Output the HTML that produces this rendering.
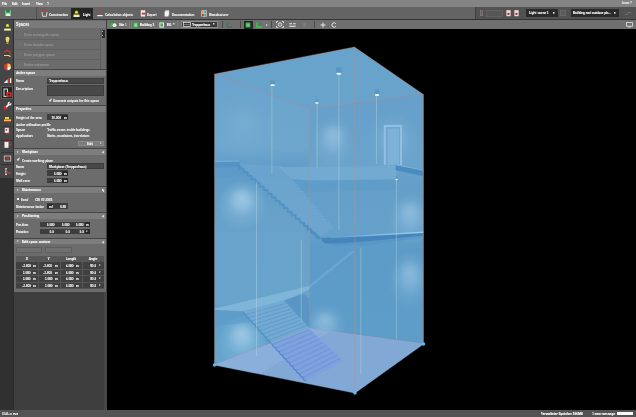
<!DOCTYPE html>
<html><head><meta charset="utf-8">
<style>
html,body{margin:0;padding:0;}
body{width:636px;height:417px;overflow:hidden;background:#000;position:relative;font-family:"Liberation Sans",sans-serif;font-size:4.2px;color:#e8e8e8;font-weight:bold;line-height:1;}
.abs{position:absolute;}
#menubar{left:0;top:0;width:636px;height:7px;background:#848484;}
#toolbar{left:0;top:7px;width:636px;height:12.3px;background:#646464;}
#tbline{left:0;top:19.2px;width:636px;height:0.9px;background:#333333;}
#strip{left:0;top:20px;width:13px;height:390px;background:#303030;}
#stripicons{left:0;top:20px;width:13px;height:158px;background:#454545;}
#panelbg{left:13px;top:20px;width:94px;height:390px;background:#3e3e3e;border-left:1.3px solid #2c2c2c;box-sizing:border-box;}
#panel{left:14.3px;top:20px;width:91.9px;height:272px;background:#6c6c6c;}
#vtool{left:106.5px;top:20.1px;width:529.5px;height:8.6px;background:#6f6f6f;}
#status{left:0;top:409.8px;width:636px;height:7.2px;background:#535353;}
.t{position:absolute;white-space:nowrap;will-change:transform;text-shadow:0 0 0.35px currentColor;transform:scaleX(0.73);transform-origin:0 50%;}
.tr{transform-origin:100% 50%;}
.tc{transform-origin:50% 50%;}
</style></head><body>
<div class="abs" id="menubar"></div>
<div class="abs" id="toolbar"></div>
<div class="abs" id="tbline"></div>
<div class="abs" id="strip"></div>
<div class="abs" id="stripicons"></div>
<div class="abs" id="panelbg"></div>
<div class="abs" id="panel"></div>
<div class="abs" id="vtool"></div>
<div class="abs" id="status"></div>
<!--SCENE-->
<svg class="abs" style="left:0;top:0" width="636" height="417" viewBox="0 0 636 417">
<defs>
<radialGradient id="spot" cx="0.5" cy="0.5" r="0.5" fx="0.5" fy="0.36"><stop offset="0" stop-color="#aed2ea" stop-opacity="0.9"/><stop offset="0.3" stop-color="#a8cee8" stop-opacity="0.7"/><stop offset="0.65" stop-color="#9cc8e6" stop-opacity="0.25"/><stop offset="1" stop-color="#9cc8e6" stop-opacity="0"/></radialGradient>
<linearGradient id="lw" x1="0" y1="0" x2="0" y2="1"><stop offset="0" stop-color="#6aa3cb"/><stop offset="0.25" stop-color="#6ea7ce"/><stop offset="0.33" stop-color="#5f9cc8"/><stop offset="0.5" stop-color="#68a2ca"/><stop offset="0.78" stop-color="#69a4cc"/><stop offset="0.82" stop-color="#5f9fca"/><stop offset="1" stop-color="#66a6ce"/></linearGradient>
<linearGradient id="rw" x1="0" y1="0" x2="0" y2="1"><stop offset="0" stop-color="#669fc9"/><stop offset="0.28" stop-color="#6aa3cc"/><stop offset="0.36" stop-color="#639fc9"/><stop offset="0.55" stop-color="#66a1ca"/><stop offset="0.62" stop-color="#5c9bc8"/><stop offset="1" stop-color="#5f9dc9"/></linearGradient>
<linearGradient id="hl" x1="0" y1="0" x2="1" y2="0"><stop offset="0" stop-color="#8cbfe3" stop-opacity="0.3"/><stop offset="0.5" stop-color="#94c5e7" stop-opacity="0.85"/><stop offset="1" stop-color="#a0cdec" stop-opacity="1"/></linearGradient>
<clipPath id="hex"><polygon points="214.5,74 354.5,47 423.5,94.5 423.5,344 355,393 214.5,365"/></clipPath>
<clipPath id="lwc"><polygon points="214.5,74 309.5,109 309.5,328.6 214.5,365"/></clipPath>
<clipPath id="rwc"><polygon points="309.5,109 423.5,94.5 423.5,344 309.5,328.6"/></clipPath>
</defs>
<g clip-path="url(#hex)">
<polygon points="214.5,74 354.5,47 423.5,94.5 423.5,344 355,393 214.5,365" fill="#68a2ca"/>
<polygon points="214.5,74 309.5,109 309.5,328.6 214.5,365" fill="url(#lw)"/>
<polygon points="309.5,109 423.5,94.5 423.5,344 309.5,328.6" fill="url(#rw)"/>
<polygon points="214.5,74 354.5,47 423.5,94.5 309.5,109" fill="#68a3cb"/>
<!-- light spots -->
<g clip-path="url(#lwc)">
<ellipse cx="243" cy="130" rx="32" ry="34" fill="url(#spot)" opacity="0.15"/>
<ellipse cx="242" cy="205" rx="25" ry="25" fill="url(#spot)" opacity="0.85"/>
<ellipse cx="242" cy="341" rx="25" ry="27" fill="url(#spot)" opacity="0.85"/>
</g>
<g clip-path="url(#rwc)">
<ellipse cx="333" cy="142" rx="21" ry="25" fill="url(#spot)" opacity="0.6"/>
<ellipse cx="394" cy="143" rx="26" ry="30" fill="url(#spot)" opacity="0.4"/>
<ellipse cx="410" cy="219" rx="22" ry="26" fill="url(#spot)" opacity="0.6"/>
<ellipse cx="410" cy="281" rx="22" ry="30" fill="url(#spot)" opacity="0.6"/>
<ellipse cx="325" cy="327" rx="22" ry="23" fill="url(#spot)" opacity="0.6"/>
</g>
<!-- door -->
<rect x="383.800" y="125" width="18.200" height="39.800" fill="#92c0e1"/>
<rect x="385.800" y="127" width="14.200" height="37.800" fill="#70a7d0"/>
<rect x="387.800" y="128.500" width="11.200" height="36.300" fill="#7db1d7"/>
<!-- upper landing underside (light band) -->
<polygon points="279,167 396,166 396,179.500 309.500,180.500 292,179" fill="#74abd2" opacity="0.9"/>
<polygon points="292,179 309.500,180.500 396,179.500 396,190 309.500,192 300,189" fill="#5a98c6" opacity="0.45"/>
<polygon points="395.600,164.600 423.500,170.300 423.500,176.300 395.600,170.200" fill="#4b8cc0"/>
<polygon points="395.600,164.200 423.500,169.800 423.500,170.800 395.600,165.200" fill="#86b9de" opacity="0.8"/>
<!-- top-left landing slab -->
<polygon points="214.500,162 239,161.500 241,167 214.500,168" fill="#5593c4"/>
<polygon points="214.500,160.800 239,160.400 239,161.600 214.500,162" fill="#7db2d8" opacity="0.8"/>
<polygon points="214.500,168 241,167 250,176 214.500,178" fill="#5c9ac8" opacity="0.6"/>
<!-- stair 1 -->
<polygon points="239,164 279,166 331.500,229 320,237" fill="#72a9d1" opacity="0.6"/>
<polyline points="239.5,165.0 239.5,168.6 243.5,168.6 243.5,172.2 247.6,172.2 247.6,175.8 251.6,175.8 251.6,179.4 255.6,179.4 255.6,183.0 259.6,183.0 259.6,186.6 263.6,186.6 263.6,190.2 267.7,190.2 267.7,193.8 271.7,193.8 271.7,197.4 275.7,197.4 275.7,201.0 279.7,201.0 279.7,204.6 283.8,204.6 283.8,208.2 287.8,208.2 287.8,211.8 291.8,211.8 291.8,215.4 295.8,215.4 295.8,219.0 299.9,219.0 299.9,222.6 303.9,222.6 303.9,226.2 307.9,226.2 307.9,229.8 311.9,229.8 311.9,233.4 316.0,233.4 316.0,237.0 320.0,237.0" fill="none" stroke="#4f8fc3" stroke-width="1.800" stroke-linejoin="round" opacity="0.8"/>
<polyline points="279.0,166.5 281.6,166.5 281.6,169.6 284.2,169.6 284.2,172.8 286.9,172.8 286.9,175.9 289.5,175.9 289.5,179.0 292.1,179.0 292.1,182.1 294.8,182.1 294.8,185.2 297.4,185.2 297.4,188.4 300.0,188.4 300.0,191.5 302.6,191.5 302.6,194.6 305.2,194.6 305.2,197.8 307.9,197.8 307.9,200.9 310.5,200.9 310.5,204.0 313.1,204.0 313.1,207.1 315.8,207.1 315.8,210.2 318.4,210.2 318.4,213.4 321.0,213.4 321.0,216.5 323.6,216.5 323.6,219.6 326.2,219.6 326.2,222.8 328.9,222.8 328.9,225.9 331.5,225.9 331.5,229.0" fill="none" stroke="#80b5da" stroke-width="0.900" opacity="0.5"/>
<polyline points="304.0,222.5 304.0,225.7 307.4,225.7 307.4,228.9 310.8,228.9 310.8,232.1 314.2,232.1 314.2,235.3 317.6,235.3 317.6,238.5 321.0,238.5" fill="none" stroke="#4a8bc0" stroke-width="1.600" opacity="0.7"/>
<!-- level 2 slab -->
<polygon points="321.700,238 423.500,232.300 423.500,235.600 380,240.300 340,243.800 325,243.500 321.700,240.500" fill="#4585bd"/>
<polygon points="330,237.200 423.500,231.600 423.500,233 330,238.300" fill="url(#hl)"/>
<polygon points="325,243.500 380,240.300 423.500,235.600 423.500,237.500 370,245 335,246" fill="#5391c5" opacity="0.55"/>
<!-- stair 2 faint -->
<polygon points="352,250.500 355,251.500 306,291 304,289.500" fill="#8cbde2" opacity="0.32"/>
<polygon points="304,289.500 306,291 285,301 282,300" fill="#8cbde2" opacity="0.4"/>
<!-- level 1 landing -->
<polygon points="214.500,308.500 309.500,286 309.500,289.500 284,300.500 243,311.500 214.500,310" fill="#80b5da"/>
<polygon points="214.500,310 243,311.500 252,322 214.500,326" fill="#5c9ac8" opacity="0.55"/>
<polygon points="284,300.500 304,294 309.500,299 309.500,328" fill="#5794c5" opacity="0.85"/>
<!-- floor -->
<polygon points="214.500,365 309.500,328.600 423.500,344 355,393" fill="#82a8d6"/>
<polygon points="214.500,365 309.500,328.600 330,331.500 260,374" fill="#8fb4dc" opacity="0.6"/>
<!-- stair 3 (wall part) -->
<polygon points="243,311.500 284,300.500 309.500,328 309.500,329.500 272,344" fill="#72aad3"/>
<!-- stair 3 (floor part) -->
<polygon points="272,344 309.500,329 344,361 306,381" fill="#7ea2dd"/>
<g stroke="#5c98c8" stroke-width="1.100" opacity="0.7">
<line x1="245.800" y1="314.600" x2="286.500" y2="303.200"/>
<line x1="248.700" y1="317.800" x2="289.100" y2="306"/>
<line x1="251.600" y1="321" x2="291.600" y2="308.800"/>
<line x1="254.500" y1="324.200" x2="294.200" y2="311.500"/>
<line x1="257.400" y1="327.400" x2="296.700" y2="314.200"/>
<line x1="260.300" y1="330.600" x2="299.300" y2="317"/>
<line x1="263.200" y1="333.800" x2="301.800" y2="319.800"/>
<line x1="266.100" y1="337" x2="304.400" y2="322.500"/>
<line x1="269" y1="340.200" x2="306.900" y2="325.200"/>
</g>
<g stroke="#678cd5" stroke-width="1.100" opacity="0.55">
<line x1="272" y1="344.500" x2="309.500" y2="329.500"/>
<line x1="275.400" y1="348.200" x2="313" y2="332.700"/>
<line x1="278.800" y1="351.900" x2="316.400" y2="335.900"/>
<line x1="282.200" y1="355.600" x2="319.900" y2="339.100"/>
<line x1="285.600" y1="359.300" x2="323.300" y2="342.300"/>
<line x1="289" y1="363" x2="326.800" y2="345.500"/>
<line x1="292.400" y1="366.700" x2="330.200" y2="348.700"/>
<line x1="295.800" y1="370.400" x2="333.700" y2="351.900"/>
<line x1="299.200" y1="374.100" x2="337.100" y2="355.100"/>
<line x1="302.600" y1="377.800" x2="340.600" y2="358.300"/>
</g>
<polyline points="243.0,311.5 244.2,313.9 245.9,314.8 247.1,317.2 248.8,318.0 250.0,320.4 251.7,321.2 252.9,323.7 254.6,324.5 255.8,326.9 257.5,327.8 258.7,330.2 260.4,331.0 261.6,333.4 263.3,334.2 264.5,336.7 266.2,337.5 267.4,339.9 269.1,340.8 270.3,343.2 272.0,344.0" fill="none" stroke="#4f8ec2" stroke-width="1.300" opacity="0.85"/>
<polyline points="272.0,344.0 273.4,346.8 275.4,347.7 276.8,350.5 278.8,351.4 280.2,354.2 282.2,355.1 283.6,357.9 285.6,358.8 287.0,361.6 289.0,362.5 290.4,365.3 292.4,366.2 293.8,369.0 295.8,369.9 297.2,372.7 299.2,373.6 300.6,376.4 302.6,377.3 304.0,380.1 306.0,381.0" fill="none" stroke="#4c7ac8" stroke-width="1.300" opacity="0.8"/>
<!-- pendant lines -->
<g stroke="#c8e2c8" stroke-width="0.800" opacity="0.45">
<line x1="271.900" y1="86" x2="271.900" y2="174"/>
<line x1="338.900" y1="75" x2="338.900" y2="230"/>
<line x1="317.100" y1="104" x2="317.100" y2="167.500"/>
<line x1="376.500" y1="95.500" x2="376.500" y2="164"/>
<line x1="256.500" y1="182" x2="256.500" y2="356"/>
<line x1="396.400" y1="180" x2="396.400" y2="339"/>
<line x1="301.300" y1="240" x2="301.300" y2="322"/>
<line x1="360.800" y1="248" x2="360.800" y2="374"/>
</g>
<!-- luminaires -->
<g fill="#4888be" opacity="0.5">
<rect x="270.400" y="80.600" width="4.400" height="3.800" rx="0.800"/>
<rect x="336.200" y="67.400" width="5.400" height="5.200" rx="0.800"/>
<rect x="315" y="98.800" width="4" height="3.200" rx="0.800" opacity="0.6"/>
<rect x="374.600" y="89.600" width="4.800" height="4.200" rx="0.800"/>
<rect x="394.800" y="176.500" width="3.400" height="2.500" rx="0.500" opacity="0.6"/>
</g>
<g fill="#ffffff">
<ellipse cx="272.600" cy="85.200" rx="2.200" ry="0.900"/>
<ellipse cx="338.800" cy="73.700" rx="2.400" ry="0.950"/>
<ellipse cx="316.900" cy="103" rx="1.900" ry="0.750"/>
<ellipse cx="377" cy="95" rx="2.200" ry="0.900"/>
<ellipse cx="396.500" cy="179.500" rx="1.400" ry="0.700" opacity="0.8"/>
</g>
</g>
<!-- edges -->
<g stroke="#cf7a52" stroke-width="0.600" fill="none" opacity="0.8">
<polyline points="214.500,365 214.500,74 354.500,47 423.500,94.500 423.500,344"/>
</g>
<g stroke="#e07a78" stroke-width="0.550" fill="none" opacity="0.6">
<polyline points="214.500,74 309.500,109 423.500,94.500"/>
<line x1="309.500" y1="109" x2="309.500" y2="328.600"/>
</g>
<g stroke="#d98a60" stroke-width="0.600" fill="none" opacity="0.7">
<line x1="354.700" y1="47" x2="354.900" y2="393"/>
</g>
<g stroke="#e2a2b0" stroke-width="0.600" fill="none" opacity="0.45">
<polyline points="214.500,365 309.500,328.600 423.500,344"/>
</g>
<polyline points="214.500,365 355,393 423.500,344" stroke="#74b8ea" stroke-width="0.700" fill="none" opacity="0.9"/>
<g fill="#4fc0f5">
<circle cx="214.500" cy="365" r="1.700"/><circle cx="355" cy="393" r="1.700"/><circle cx="423.500" cy="344" r="1.700"/><circle cx="309.500" cy="328.600" r="1.100" opacity="0.8"/>
</g>
</svg>

<!--/SCENE-->
<!--UI-->
<div class="t" style="left:2.3px;top:2.04px;font-size:4.1px;color:#f0f0f0;">File</div>
<div class="t" style="left:11.8px;top:2.04px;font-size:4.1px;color:#f0f0f0;">Edit</div>
<div class="t" style="left:22px;top:2.04px;font-size:4.1px;color:#f0f0f0;">Insert</div>
<div class="t" style="left:35.8px;top:2.04px;font-size:4.1px;color:#f0f0f0;">View</div>
<div class="t" style="left:47px;top:2.04px;font-size:4.1px;color:#f0f0f0;">?</div>
<div class="t tr" style="right:4px;top:1.96px;font-size:3.8px;color:#e0e0e0;">Zoom ?</div>
<div class="abs" style="left:0px;top:7.3px;width:36px;height:11.9px;background:#666666;"></div>
<div class="abs" style="left:35.6px;top:7.3px;width:0.8px;height:11.9px;background:#505050;"></div>
<svg class="abs" style="left:5.2px;top:9.9px" width="6.2" height="6.6" viewBox="0 0 7 7"><rect x="0" y="0" width="7" height="7" rx="0.8" fill="#5ccf80"/><rect x="1.6" y="0" width="3.6" height="2.4" fill="#2a6a3c"/><rect x="1.3" y="4" width="4.4" height="3" fill="#e8f4ea"/></svg>
<svg class="abs" style="left:40.500px;top:10px" width="7" height="7" viewBox="0 0 7 7"><path d="M0.6 1.2 L6.4 1.2" stroke="#e03030" stroke-width="1"/><path d="M1 2 L1.6 6.3 L5.4 6.3 L6 2" stroke="#f0f0f0" stroke-width="0.8" fill="none"/></svg>
<div class="t" style="left:49.3px;top:12.60px;font-size:4.2px;color:#e6e6e6;">Construction</div>
<div class="abs" style="left:70.7px;top:7.6px;width:22.2px;height:11.6px;background:#252525;"></div>
<svg class="abs" style="left:73px;top:9.800px" width="7" height="8" viewBox="0 0 7 8"><path d="M1.5 3.600 L2.600 0.800 L4.400 0.800 L5.500 3.600 Z" fill="#e8e040"/><rect x="0.500" y="5" width="6" height="2" fill="#f2f0c0"/><rect x="0.500" y="4.300" width="6" height="0.800" fill="#b8b030"/></svg>
<div class="t" style="left:83.3px;top:12.60px;font-size:4.2px;color:#e6e6e6;">Light</div>
<svg class="abs" style="left:96.500px;top:10px" width="6" height="7" viewBox="0 0 6 7"><rect x="2.500" y="0.500" width="1" height="4" fill="#e03030"/><rect x="0.300" y="5" width="5.400" height="1.200" fill="#f0f0f0"/></svg>
<div class="t" style="left:104.5px;top:12.60px;font-size:4.2px;color:#e6e6e6;">Calculation objects</div>
<svg class="abs" style="left:139.500px;top:10px" width="6" height="7" viewBox="0 0 6 7"><rect x="0.800" y="0.300" width="4.400" height="6.200" fill="#f4f4f4"/><rect x="1.800" y="2.600" width="3.400" height="2" fill="#e03030"/></svg>
<div class="t" style="left:147.3px;top:12.60px;font-size:4.2px;color:#e6e6e6;">Export</div>
<svg class="abs" style="left:163.500px;top:10px" width="6" height="7" viewBox="0 0 6 7"><rect x="1.400" y="0.300" width="3.800" height="5" fill="#dcdcdc"/><rect x="0.600" y="1.500" width="3.800" height="5" fill="#f4f4f4"/></svg>
<div class="t" style="left:171.6px;top:12.60px;font-size:4.2px;color:#e6e6e6;">Documentation</div>
<svg class="abs" style="left:200.500px;top:10px" width="6" height="7" viewBox="0 0 6 7"><rect x="0.400" y="0.400" width="5.200" height="6.200" fill="#e8e8e8"/><rect x="1" y="1" width="1.800" height="2.400" fill="#e0a020"/><rect x="3.200" y="1" width="1.800" height="2.400" fill="#3aa0d8"/><rect x="1" y="3.800" width="1.800" height="2.400" fill="#d03030"/><rect x="3.200" y="3.800" width="1.800" height="2.400" fill="#50b050"/></svg>
<div class="t" style="left:208.6px;top:12.60px;font-size:4.2px;color:#e6e6e6;">Manufacturer</div>
<div class="abs" style="left:475.3px;top:7.3px;width:160.7px;height:11.9px;background:#525252;border-left:0.6px solid #404040;"></div>
<div class="abs" style="left:479.8px;top:10.2px;width:3.6px;height:6px;background:#6a5e5e;box-sizing:border-box;border:0.4px solid #7a7070;"></div>
<div class="abs" style="left:485.5px;top:10px;width:17.5px;height:6.5px;background:#575757;box-sizing:border-box;border:0.4px solid #606060;"></div>
<svg class="abs" style="left:505.7px;top:10px" width="5" height="7" viewBox="0 0 5 7"><rect x="0.400" y="0.200" width="4.200" height="6" fill="#e4e4e4"/><rect x="1.500" y="2.800" width="2" height="2.200" fill="#d82020"/></svg>
<svg class="abs" style="left:514.2px;top:10px" width="5" height="7" viewBox="0 0 5 7"><rect x="0.400" y="0.200" width="4.200" height="6" fill="#e4e4e4"/><rect x="1.500" y="2.800" width="2" height="2.200" fill="#d82020"/></svg>
<div class="abs" style="left:526.3px;top:9px;width:31.3px;height:7.6px;background:#2a2a2a;"></div>
<div class="t" style="left:528.5px;top:11.20px;font-size:4.2px;color:#e8e8e8;">Light scene 1</div>
<div class="t" style="left:553px;top:11.18px;font-size:4px;color:#e8e8e8;">&#9662;</div>
<div class="abs" style="left:559.8px;top:9.6px;width:6.6px;height:6.8px;background:#5a5a5a;box-sizing:border-box;border:0.4px solid #666;"></div>
<div class="abs" style="left:570.7px;top:9px;width:48.5px;height:7.6px;background:#2a2a2a;"></div>
<div class="t" style="left:572.7px;top:11.24px;font-size:4.1px;color:#e8e8e8;">Building and outdoor pla...</div>
<div class="t" style="left:614px;top:11.18px;font-size:4px;color:#e8e8e8;">&#9662;</div>
<svg class="abs" style="left:624px;top:10.500px" width="8" height="5" viewBox="0 0 8 5"><path d="M0.500 3.500 L3 3.500 L4 1.500 L7.500 1.500" stroke="#7a7a7a" stroke-width="0.700" fill="none"/></svg>
<div class="abs" style="left:108px;top:20.8px;width:21.7px;height:7.4px;background:#6e6e6e;box-sizing:border-box;border-left:0.5px solid #7c7c7c;border-right:0.5px solid #7c7c7c;"></div>
<svg class="abs" style="left:110px;top:21.500px" width="7" height="6" viewBox="0 0 7 6"><rect x="0.300" y="1" width="4" height="4" fill="#3bb54a"/><circle cx="4.600" cy="3.200" r="1.900" fill="#f0f0f0"/></svg>
<div class="t" style="left:118.5px;top:22.98px;font-size:4px;color:#f0f0f0;">Site 1</div>
<div class="abs" style="left:130.8px;top:20.8px;width:24.5px;height:7.4px;background:#6e6e6e;box-sizing:border-box;border-left:0.5px solid #7c7c7c;border-right:0.5px solid #7c7c7c;"></div>
<svg class="abs" style="left:132.500px;top:21.500px" width="6" height="6" viewBox="0 0 6 6"><rect x="0.400" y="0.400" width="4.600" height="5.200" fill="#3bb54a"/><rect x="1.400" y="1.400" width="2.600" height="3.200" fill="#8fe09a"/></svg>
<div class="t" style="left:140px;top:22.98px;font-size:4px;color:#f0f0f0;">Building 1</div>
<div class="abs" style="left:156.5px;top:20.8px;width:21px;height:7.4px;background:#6e6e6e;box-sizing:border-box;border-left:0.5px solid #7c7c7c;border-right:0.5px solid #7c7c7c;"></div>
<svg class="abs" style="left:158.500px;top:21.500px" width="6" height="6" viewBox="0 0 6 6"><rect x="0.400" y="0.400" width="4.600" height="5.200" fill="#e8e8e8"/><rect x="1.400" y="1.400" width="2.600" height="3.200" fill="#3bb54a"/></svg>
<div class="t" style="left:166.5px;top:22.98px;font-size:4px;color:#f0f0f0;">EG</div>
<div class="t" style="left:172.5px;top:23.13px;font-size:3.6px;color:#d8d8d8;">&#9662;</div>
<div class="abs" style="left:180.8px;top:20.8px;width:37.2px;height:7.4px;background:#3a3a3a;box-sizing:border-box;border:0.6px solid #8a8a8a;"></div>
<svg class="abs" style="left:183px;top:22px" width="8" height="5" viewBox="0 0 8 5"><rect x="0.400" y="0.400" width="7.200" height="4.200" fill="none" stroke="#f0f0f0" stroke-width="0.700"/><line x1="0.400" y1="2.500" x2="7.600" y2="2.500" stroke="#b0b0b0" stroke-width="0.500"/></svg>
<div class="t" style="left:192.3px;top:22.98px;font-size:4px;color:#f0f0f0;">Treppenhaus</div>
<div class="t" style="left:213px;top:23.13px;font-size:3.6px;color:#d8d8d8;">&#9662;</div>
<svg class="abs" style="left:225.500px;top:21.500px" width="7" height="6" viewBox="0 0 7 6"><path d="M1.500 0.800 L1.500 5 L6 5" stroke="#2e7a3a" stroke-width="1" fill="none"/></svg>
<div class="abs" style="left:222px;top:21px;width:0.6px;height:7px;background:#4a4a4a;"></div>
<div class="abs" style="left:240px;top:21px;width:0.6px;height:7px;background:#4a4a4a;"></div>
<div class="abs" style="left:243.8px;top:20.6px;width:8.8px;height:8px;background:#262626;"></div>
<svg class="abs" style="left:245px;top:21.500px" width="6" height="6" viewBox="0 0 6 6"><rect x="0.600" y="0.600" width="4.800" height="4.800" fill="#3bb54a"/><rect x="1.600" y="1.600" width="2.800" height="2.800" fill="#66d070"/></svg>
<svg class="abs" style="left:255.500px;top:21.500px" width="6" height="6" viewBox="0 0 6 6"><path d="M1 0.400 L1 5 L5.800 5" stroke="#30d040" stroke-width="1.500" fill="none"/></svg>
<div class="abs" style="left:263px;top:21.2px;width:6.5px;height:6.8px;background:#747474;"></div>
<div class="t" style="left:265.5px;top:23.58px;font-size:3.2px;color:#e0e0e0;">&#9662;</div>
<div class="abs" style="left:270.5px;top:21px;width:0.6px;height:7px;background:#4a4a4a;"></div>
<svg class="abs" style="left:275.500px;top:21px" width="8" height="7" viewBox="0 0 8 7"><circle cx="4" cy="3.500" r="1.700" fill="none" stroke="#f0f0f0" stroke-width="0.900"/><path d="M0.500 2 L0.500 0.500 L2 0.500 M6 0.500 L7.500 0.500 L7.500 2 M7.500 5 L7.500 6.500 L6 6.500 M2 6.500 L0.500 6.500 L0.500 5" stroke="#f0f0f0" stroke-width="0.800" fill="none"/></svg>
<svg class="abs" style="left:288.500px;top:21.500px" width="7" height="6" viewBox="0 0 7 6"><path d="M0.300 1.800 L2.900 1.800 M4.100 1.800 L6.700 1.800 M0.300 4.300 L6.700 4.300" stroke="#f0f0f0" stroke-width="1.100"/></svg>
<div class="abs" style="left:303px;top:22.5px;width:3px;height:4px;background:#7a7a7a;"></div>
<div class="abs" style="left:314px;top:21px;width:0.6px;height:7px;background:#4a4a4a;"></div>
<svg class="abs" style="left:319.500px;top:21.500px" width="6" height="6" viewBox="0 0 6 6"><path d="M3 0.500 L3 5.500 M0.500 3 L5.500 3" stroke="#f4f4f4" stroke-width="0.900"/></svg>
<svg class="abs" style="left:330.500px;top:21.500px" width="6" height="6" viewBox="0 0 6 6"><path d="M4.800 1.600 A2.200 2.200 0 1 0 4.800 4.400" stroke="#f4f4f4" stroke-width="0.900" fill="none"/></svg>
<svg class="abs" style="left:625.500px;top:21.800px" width="7" height="6" viewBox="0 0 7 6"><rect x="0.600" y="0.600" width="5.800" height="3.600" fill="none" stroke="#e8e8e8" stroke-width="0.800"/><rect x="2.300" y="4.600" width="2.400" height="0.800" fill="#e8e8e8"/></svg>
<div class="abs" style="left:0.5px;top:86.3px;width:12.3px;height:12.5px;background:#262626;box-sizing:border-box;border:0.5px solid #5a5a5a;"></div>
<svg class="abs" style="left:2.5px;top:22.5px" width="9" height="9" viewBox="0 0 9 9"><path d="M2.800 3.800 L3.600 1 L5.400 1 L6.200 3.800 Z" fill="#e8e040"/><rect x="1.200" y="5.800" width="6.600" height="1.800" fill="#f2f0c0"/><rect x="1.200" y="5" width="6.600" height="0.800" fill="#a8a030"/></svg>
<svg class="abs" style="left:2.5px;top:35.6px" width="9" height="9" viewBox="0 0 9 9"><path d="M4.500 0.800 C6.500 0.800 7 3 6 4.500 L5.500 6.500 L3.500 6.500 L3 4.500 C2 3 2.500 0.800 4.500 0.800 Z" fill="#e6d860"/><rect x="3.600" y="6.800" width="1.800" height="1.200" fill="#b0a040"/></svg>
<svg class="abs" style="left:2.5px;top:48.7px" width="9" height="9" viewBox="0 0 9 9"><path d="M1 6.500 L6 6.500 L7.500 7.800" stroke="#e6d860" stroke-width="1.200" fill="none"/><path d="M1.500 3 L3.500 1.200 L6.500 2.500 L7.500 4.500" stroke="#e03030" stroke-width="1.100" fill="none"/></svg>
<svg class="abs" style="left:2.5px;top:61.8px" width="9" height="9" viewBox="0 0 9 9"><circle cx="4.500" cy="4.800" r="3.400" fill="#e03a30"/><path d="M4.500 4.800 L4.500 1.400 A3.400 3.400 0 0 1 7.900 4.800 Z" fill="#f0d040"/><path d="M4.500 4.800 L7.900 4.800 A3.400 3.400 0 0 1 4.500 8.200 Z" fill="#f4f4f4"/></svg>
<svg class="abs" style="left:2.5px;top:74.9px" width="9" height="9" viewBox="0 0 9 9"><path d="M0.800 8 L4.600 4.200 L4.600 8 Z" fill="#f0f0f0"/><rect x="5" y="2.800" width="1.600" height="5.200" fill="#e03030"/><rect x="7" y="3.200" width="1.300" height="4.800" fill="#f0f0f0"/></svg>
<svg class="abs" style="left:2.5px;top:88.0px" width="9" height="9" viewBox="0 0 9 9"><rect x="1" y="1" width="3.400" height="7.400" fill="none" stroke="#f0f0f0" stroke-width="0.900"/><path d="M3.200 4.300 L8.600 4.300 L8.600 8.800 L3.200 8.800 Z" fill="#e02828"/><rect x="4.800" y="5.800" width="2.400" height="1.600" fill="#3a2020"/></svg>
<svg class="abs" style="left:2.5px;top:101.1px" width="9" height="9" viewBox="0 0 9 9"><path d="M2 7.400 L6 3.200" stroke="#f0f0f0" stroke-width="1.700"/><circle cx="6.500" cy="2.700" r="1.900" fill="#f0f0f0"/><path d="M6.500 2.700 L8.600 0.600" stroke="#454545" stroke-width="1.200"/><circle cx="2.200" cy="7.200" r="1.600" fill="#e02828"/><path d="M1 5 L3 6.500" stroke="#e02828" stroke-width="1"/></svg>
<svg class="abs" style="left:2.5px;top:114.2px" width="9" height="9" viewBox="0 0 9 9"><rect x="1" y="5.500" width="7" height="2.500" fill="#e8d040"/><rect x="2" y="3" width="4" height="2" fill="#e8d040"/><rect x="1" y="7" width="7" height="1.200" fill="#e03030"/></svg>
<svg class="abs" style="left:2.5px;top:127.3px" width="9" height="9" viewBox="0 0 9 9"><rect x="1.800" y="0.800" width="4" height="5" fill="#f4f4f4"/><rect x="2.600" y="1.800" width="1.600" height="2" fill="#e03030"/><path d="M3 7.500 L5 6 L7 7.500" stroke="#e03030" stroke-width="0.800" fill="none"/><circle cx="7" cy="5.500" r="0.700" fill="#e03030"/></svg>
<svg class="abs" style="left:2.5px;top:140.4px" width="9" height="9" viewBox="0 0 9 9"><rect x="1.500" y="2" width="4" height="5.800" fill="#f0f0f0"/><rect x="1.500" y="1" width="5.500" height="1" fill="#e03030"/><circle cx="7" cy="4.500" r="0.900" fill="#e03030"/></svg>
<svg class="abs" style="left:2.5px;top:153.5px" width="9" height="9" viewBox="0 0 9 9"><rect x="1.300" y="2" width="6.400" height="5" fill="none" stroke="#c4c4c4" stroke-width="0.900"/><rect x="3.300" y="3.500" width="2.600" height="2" fill="#e02828"/></svg>
<svg class="abs" style="left:2.5px;top:166.6px" width="9" height="9" viewBox="0 0 9 9"><circle cx="3" cy="1.800" r="0.900" fill="#f0f0f0"/><circle cx="3" cy="4.500" r="0.900" fill="#f0f0f0"/><circle cx="3" cy="7.200" r="0.900" fill="#f0f0f0"/><path d="M3 4.500 L6.500 6" stroke="#e03030" stroke-width="1"/><circle cx="6.800" cy="6.200" r="0.900" fill="#e03030"/></svg>
<div class="abs" style="left:0.5px;top:126.3px;width:12px;height:0.5px;background:#353535;"></div>
<div class="abs" style="left:0.5px;top:139.6px;width:12px;height:0.5px;background:#353535;"></div>
<div class="abs" style="left:0.5px;top:152.2px;width:12px;height:0.5px;background:#353535;"></div>
<div class="abs" style="left:0.5px;top:164.2px;width:12px;height:0.5px;background:#353535;"></div>
<div class="abs" style="left:14px;top:20.5px;width:92px;height:7.7px;background:#7a7a7a;"></div>
<div class="t" style="left:16px;top:22.42px;font-size:5.2px;color:#e8e8e8;">Spaces</div>
<div class="abs" style="left:14.3px;top:38.9px;width:86px;height:0.5px;background:#626262;"></div>
<div class="abs" style="left:18px;top:32.6px;width:3.5px;height:3.2px;background:#6f6f6f;"></div>
<div class="t" style="left:24.2px;top:32.67px;font-size:4.3px;color:#8c8c8c;">Draw rectangular space</div>
<div class="abs" style="left:14.3px;top:49.05px;width:86px;height:0.5px;background:#626262;"></div>
<div class="abs" style="left:18px;top:42.75px;width:3.5px;height:3.2px;background:#6f6f6f;"></div>
<div class="t" style="left:24.2px;top:42.82px;font-size:4.3px;color:#8c8c8c;">Draw circular space</div>
<div class="abs" style="left:14.3px;top:59.2px;width:86px;height:0.5px;background:#626262;"></div>
<div class="abs" style="left:18px;top:52.9px;width:3.5px;height:3.2px;background:#6f6f6f;"></div>
<div class="t" style="left:24.2px;top:52.97px;font-size:4.3px;color:#8c8c8c;">Draw polygon space</div>
<div class="abs" style="left:14.3px;top:69.35000000000001px;width:86px;height:0.5px;background:#626262;"></div>
<div class="abs" style="left:18px;top:63.050000000000004px;width:3.5px;height:3.2px;background:#6f6f6f;"></div>
<div class="t" style="left:24.2px;top:63.12px;font-size:4.3px;color:#8c8c8c;">Delete subspace</div>
<div class="abs" style="left:100.3px;top:28.5px;width:0.5px;height:42px;background:#5c5c5c;"></div>
<div class="abs" style="left:101.8px;top:30px;width:3px;height:7.8px;background:#2c2c2c;"></div>
<div class="t" style="left:102.4px;top:31.39px;font-size:2.4px;color:#d0d0d0;">&#9652;</div>
<div class="t" style="left:102.4px;top:34.69px;font-size:2.4px;color:#d0d0d0;">&#9662;</div>
<div class="abs" style="left:14.3px;top:69.3px;width:91.9px;height:1px;background:#454545;"></div>
<div class="abs" style="left:14.3px;top:70.3px;width:91.9px;height:5.4px;background:#7d7d7d;"></div>
<div class="t" style="left:16px;top:71.37px;font-size:4.3px;color:#efefef;">Active space</div>
<div class="t" style="left:16px;top:79.10px;font-size:4.2px;color:#e6e6e6;">Name</div>
<div class="abs" style="left:47px;top:77.6px;width:57px;height:6.1px;background:#484848;box-sizing:border-box;border:0.4px solid #3c3c3c;"></div>
<div class="t" style="left:49px;top:79.10px;font-size:4.2px;color:#e6e6e6;">Treppenhaus</div>
<div class="t" style="left:16px;top:86.60px;font-size:4.2px;color:#e6e6e6;">Description</div>
<div class="abs" style="left:47px;top:85.2px;width:57px;height:10.4px;background:#484848;box-sizing:border-box;border:0.4px solid #3c3c3c;"></div>
<div class="t" style="left:48.7px;top:98.55px;font-size:4.6px;color:#ffffff;">&#10004;</div>
<div class="t" style="left:53.2px;top:99.00px;font-size:4.2px;color:#e6e6e6;">Generate outputs for this space</div>
<div class="abs" style="left:14.3px;top:104.9px;width:91.9px;height:1px;background:#454545;"></div>
<div class="abs" style="left:14.3px;top:105.9px;width:91.9px;height:6.4px;background:#7d7d7d;"></div>
<div class="t" style="left:16px;top:107.47px;font-size:4.3px;color:#efefef;">Properties</div>
<div class="t" style="left:16px;top:115.60px;font-size:4.2px;color:#e6e6e6;">Height of the area</div>
<div class="abs" style="left:47px;top:114.2px;width:21px;height:5.7px;background:#3e3e3e;"></div>
<div class="abs" style="left:62.3px;top:114.6px;width:5.3px;height:4.9px;background:#2a2a2a;"></div>
<div class="t tr" style="right:575px;top:115.50px;font-size:4.2px;color:#e6e6e6;">10.200</div>
<div class="t" style="left:63.6px;top:115.50px;font-size:4.2px;color:#e6e6e6;">m</div>
<div class="t" style="left:16px;top:122.70px;font-size:4.2px;color:#e6e6e6;">Active utilisation profile</div>
<div class="t" style="left:16px;top:128.10px;font-size:4.2px;color:#e6e6e6;">Space</div>
<div class="t" style="left:47px;top:128.10px;font-size:4.2px;color:#e6e6e6;">Traffic zones inside buildings</div>
<div class="t" style="left:16px;top:134.20px;font-size:4.2px;color:#e6e6e6;">Application</div>
<div class="t" style="left:47px;top:134.20px;font-size:4.2px;color:#e6e6e6;">Stairs, escalators, travelators</div>
<div class="abs" style="left:78.3px;top:140.5px;width:25.5px;height:5.2px;background:#7c7c7c;box-sizing:border-box;border:0.4px solid #8a8a8a;"></div>
<div class="t" style="left:86.5px;top:141.60px;font-size:4.2px;color:#e6e6e6;">Edit</div>
<div class="t" style="left:100px;top:142.06px;font-size:3px;color:#e0e0e0;">&#9662;</div>
<div class="abs" style="left:14.3px;top:147.7px;width:91.9px;height:1px;background:#454545;"></div>
<div class="abs" style="left:14.3px;top:148.7px;width:91.9px;height:6.3px;background:#7d7d7d;"></div>
<div class="t" style="left:17.3px;top:150.81px;font-size:3px;color:#e0e0e0;">&#9662;</div>
<div class="t" style="left:21.5px;top:150.22px;font-size:4.3px;color:#efefef;">Workplane</div>
<div class="t" style="left:102.3px;top:151.04px;font-size:2.8px;color:#e8e8e8;">&#9664;</div>
<div class="t" style="left:17.3px;top:158.15px;font-size:4.6px;color:#ffffff;">&#10004;</div>
<div class="t" style="left:22px;top:158.60px;font-size:4.2px;color:#e6e6e6;">Create working plane</div>
<div class="t" style="left:16px;top:164.60px;font-size:4.2px;color:#e6e6e6;">Name</div>
<div class="abs" style="left:47px;top:163.4px;width:57px;height:5.6px;background:#484848;box-sizing:border-box;border:0.4px solid #3c3c3c;"></div>
<div class="t" style="left:49px;top:164.60px;font-size:4.2px;color:#e6e6e6;">Workplane (Treppenhaus)</div>
<div class="t" style="left:16px;top:171.60px;font-size:4.2px;color:#e6e6e6;">Height</div>
<div class="abs" style="left:47px;top:170.39999999999998px;width:21px;height:5.6px;background:#3e3e3e;"></div>
<div class="abs" style="left:62.3px;top:170.79999999999998px;width:5.3px;height:4.8px;background:#2a2a2a;"></div>
<div class="t tr" style="right:575px;top:171.60px;font-size:4.2px;color:#e6e6e6;">0.000</div>
<div class="t" style="left:63.6px;top:171.60px;font-size:4.2px;color:#e6e6e6;">m</div>
<div class="t" style="left:16px;top:178.80px;font-size:4.2px;color:#e6e6e6;">Wall zone</div>
<div class="abs" style="left:47px;top:177.6px;width:21px;height:5.6px;background:#3e3e3e;"></div>
<div class="abs" style="left:62.3px;top:178.0px;width:5.3px;height:4.8px;background:#2a2a2a;"></div>
<div class="t tr" style="right:575px;top:178.80px;font-size:4.2px;color:#e6e6e6;">0.000</div>
<div class="t" style="left:63.6px;top:178.80px;font-size:4.2px;color:#e6e6e6;">m</div>
<div class="abs" style="left:14.3px;top:185.6px;width:91.9px;height:1px;background:#454545;"></div>
<div class="abs" style="left:14.3px;top:186.6px;width:91.9px;height:6.5px;background:#7d7d7d;"></div>
<div class="t" style="left:17.3px;top:188.81px;font-size:3px;color:#e0e0e0;">&#9662;</div>
<div class="t" style="left:21.5px;top:188.22px;font-size:4.3px;color:#efefef;">Maintenance</div>
<div class="t" style="left:101.8px;top:188.68px;font-size:4px;color:#f0f0f0;">&#9998;</div>
<div class="abs" style="left:17.4px;top:198.4px;width:1.8px;height:1.8px;background:#f4f4f4;"></div>
<div class="t" style="left:21px;top:197.80px;font-size:4.2px;color:#e6e6e6;">fixed</div>
<div class="t" style="left:35px;top:197.80px;font-size:4.2px;color:#e6e6e6;">CIE 97:2005</div>
<div class="t" style="left:16px;top:204.80px;font-size:4.2px;color:#e6e6e6;">Maintenance factor</div>
<div class="abs" style="left:47px;top:203.4px;width:21px;height:5.8px;background:#3e3e3e;"></div>
<div class="abs" style="left:47.3px;top:203.8px;width:6px;height:5px;background:#2a2a2a;"></div>
<div class="t" style="left:48.6px;top:204.80px;font-size:4.2px;color:#e6e6e6;">mf</div>
<div class="t tr" style="right:570px;top:204.80px;font-size:4.2px;color:#e6e6e6;">0.80</div>
<div class="abs" style="left:14.3px;top:212.2px;width:91.9px;height:1px;background:#454545;"></div>
<div class="abs" style="left:14.3px;top:213.2px;width:91.9px;height:5.8px;background:#7d7d7d;"></div>
<div class="t" style="left:17.3px;top:215.06px;font-size:3px;color:#e0e0e0;">&#9662;</div>
<div class="t" style="left:21.5px;top:214.47px;font-size:4.3px;color:#efefef;">Positioning</div>
<div class="t" style="left:102.3px;top:215.24px;font-size:2.8px;color:#e8e8e8;">&#9664;</div>
<div class="t" style="left:16px;top:222.70px;font-size:4.2px;color:#e6e6e6;">Position</div>
<div class="abs" style="left:40.3px;top:221.5px;width:49.7px;height:5.6px;background:#3e3e3e;"></div>
<div class="abs" style="left:56px;top:221.5px;width:0.5px;height:5.6px;background:#3a3a3a;"></div>
<div class="abs" style="left:71.5px;top:221.5px;width:0.5px;height:5.6px;background:#3a3a3a;"></div>
<div class="abs" style="left:85.2px;top:221.9px;width:4.5px;height:4.8px;background:#2a2a2a;"></div>
<div class="t tr" style="right:582px;top:222.70px;font-size:4.2px;color:#e6e6e6;">0.000</div>
<div class="t tr" style="right:566.5px;top:222.70px;font-size:4.2px;color:#e6e6e6;">0.000</div>
<div class="t tr" style="right:552.5px;top:222.70px;font-size:4.2px;color:#e6e6e6;">0.000</div>
<div class="t" style="left:86.3px;top:222.70px;font-size:4.2px;color:#e6e6e6;">m</div>
<div class="t" style="left:16px;top:229.90px;font-size:4.2px;color:#e6e6e6;">Rotation</div>
<div class="abs" style="left:40.3px;top:228.7px;width:49.7px;height:5.6px;background:#3e3e3e;"></div>
<div class="abs" style="left:56px;top:228.7px;width:0.5px;height:5.6px;background:#3a3a3a;"></div>
<div class="abs" style="left:71.5px;top:228.7px;width:0.5px;height:5.6px;background:#3a3a3a;"></div>
<div class="abs" style="left:85.2px;top:229.1px;width:4.5px;height:4.8px;background:#2a2a2a;"></div>
<div class="t tr" style="right:582px;top:229.90px;font-size:4.2px;color:#e6e6e6;">0.0</div>
<div class="t tr" style="right:566.5px;top:229.90px;font-size:4.2px;color:#e6e6e6;">0.0</div>
<div class="t tr" style="right:552.5px;top:229.90px;font-size:4.2px;color:#e6e6e6;">0.0</div>
<div class="t" style="left:86.3px;top:229.90px;font-size:4.2px;color:#e6e6e6;">&deg;</div>
<div class="abs" style="left:14.3px;top:237.6px;width:91.9px;height:1px;background:#454545;"></div>
<div class="abs" style="left:14.3px;top:238.6px;width:91.9px;height:5.8px;background:#7d7d7d;"></div>
<div class="t" style="left:17.3px;top:240.46px;font-size:3px;color:#e0e0e0;">&#9662;</div>
<div class="t" style="left:21.5px;top:239.87px;font-size:4.3px;color:#efefef;">Edit space contour</div>
<div class="t" style="left:102.3px;top:240.84px;font-size:2.8px;color:#e8e8e8;">&#9664;</div>
<div class="abs" style="left:16.3px;top:246.5px;width:25.5px;height:6.1px;background:#707070;box-sizing:border-box;border:0.4px solid #5e5e5e;"></div>
<div class="abs" style="left:45.4px;top:246.5px;width:26.5px;height:6.1px;background:#707070;box-sizing:border-box;border:0.4px solid #5e5e5e;"></div>
<div class="abs" style="left:16.3px;top:255.5px;width:87.9px;height:33.4px;background:#404040;"></div>
<div class="abs" style="left:16.3px;top:255.5px;width:87.9px;height:6.8px;background:#575757;"></div>
<div class="t tc" style="left:16.3px;width:21.7px;text-align:center;top:257.40px;font-size:4.2px;color:#f0f0f0;">X</div>
<div class="t tc" style="left:38px;width:21.5px;text-align:center;top:257.40px;font-size:4.2px;color:#f0f0f0;">Y</div>
<div class="t tc" style="left:59.5px;width:22.0px;text-align:center;top:257.40px;font-size:4.2px;color:#f0f0f0;">Length</div>
<div class="t tc" style="left:81.5px;width:22.0px;text-align:center;top:257.40px;font-size:4.2px;color:#f0f0f0;">Angle</div>
<div class="abs" style="left:38px;top:255.5px;width:0.5px;height:33.2px;background:#565656;"></div>
<div class="abs" style="left:59.5px;top:255.5px;width:0.5px;height:33.2px;background:#565656;"></div>
<div class="abs" style="left:81.5px;top:255.5px;width:0.5px;height:33.2px;background:#565656;"></div>
<div class="abs" style="left:16.3px;top:268.8px;width:87.9px;height:0.5px;background:#565656;"></div>
<div class="t tr" style="right:605.5px;top:264.00px;font-size:4.2px;color:#e6e6e6;">-2.000</div>
<div class="t" style="left:33px;top:264.00px;font-size:4.2px;color:#e6e6e6;">m</div>
<div class="t tr" style="right:584px;top:264.00px;font-size:4.2px;color:#e6e6e6;">-3.000</div>
<div class="t" style="left:54.5px;top:264.00px;font-size:4.2px;color:#e6e6e6;">m</div>
<div class="t tr" style="right:562.5px;top:264.00px;font-size:4.2px;color:#e6e6e6;">4.000</div>
<div class="t" style="left:76px;top:264.00px;font-size:4.2px;color:#e6e6e6;">m</div>
<div class="t tr" style="right:539.5px;top:264.00px;font-size:4.2px;color:#e6e6e6;">90.0</div>
<div class="t" style="left:98.8px;top:264.00px;font-size:4.2px;color:#e6e6e6;">&deg;</div>
<div class="abs" style="left:16.3px;top:275.35px;width:87.9px;height:0.5px;background:#565656;"></div>
<div class="t tr" style="right:605.5px;top:270.55px;font-size:4.2px;color:#e6e6e6;">2.000</div>
<div class="t" style="left:33px;top:270.55px;font-size:4.2px;color:#e6e6e6;">m</div>
<div class="t tr" style="right:584px;top:270.55px;font-size:4.2px;color:#e6e6e6;">-3.000</div>
<div class="t" style="left:54.5px;top:270.55px;font-size:4.2px;color:#e6e6e6;">m</div>
<div class="t tr" style="right:562.5px;top:270.55px;font-size:4.2px;color:#e6e6e6;">6.000</div>
<div class="t" style="left:76px;top:270.55px;font-size:4.2px;color:#e6e6e6;">m</div>
<div class="t tr" style="right:539.5px;top:270.55px;font-size:4.2px;color:#e6e6e6;">90.0</div>
<div class="t" style="left:98.8px;top:270.55px;font-size:4.2px;color:#e6e6e6;">&deg;</div>
<div class="abs" style="left:16.3px;top:281.90000000000003px;width:87.9px;height:0.5px;background:#565656;"></div>
<div class="t tr" style="right:605.5px;top:277.10px;font-size:4.2px;color:#e6e6e6;">2.000</div>
<div class="t" style="left:33px;top:277.10px;font-size:4.2px;color:#e6e6e6;">m</div>
<div class="t tr" style="right:584px;top:277.10px;font-size:4.2px;color:#e6e6e6;">3.000</div>
<div class="t" style="left:54.5px;top:277.10px;font-size:4.2px;color:#e6e6e6;">m</div>
<div class="t tr" style="right:562.5px;top:277.10px;font-size:4.2px;color:#e6e6e6;">4.000</div>
<div class="t" style="left:76px;top:277.10px;font-size:4.2px;color:#e6e6e6;">m</div>
<div class="t tr" style="right:539.5px;top:277.10px;font-size:4.2px;color:#e6e6e6;">90.0</div>
<div class="t" style="left:98.8px;top:277.10px;font-size:4.2px;color:#e6e6e6;">&deg;</div>
<div class="abs" style="left:16.3px;top:288.45px;width:87.9px;height:0.5px;background:#565656;"></div>
<div class="t tr" style="right:605.5px;top:283.65px;font-size:4.2px;color:#e6e6e6;">-2.000</div>
<div class="t" style="left:33px;top:283.65px;font-size:4.2px;color:#e6e6e6;">m</div>
<div class="t tr" style="right:584px;top:283.65px;font-size:4.2px;color:#e6e6e6;">3.000</div>
<div class="t" style="left:54.5px;top:283.65px;font-size:4.2px;color:#e6e6e6;">m</div>
<div class="t tr" style="right:562.5px;top:283.65px;font-size:4.2px;color:#e6e6e6;">6.000</div>
<div class="t" style="left:76px;top:283.65px;font-size:4.2px;color:#e6e6e6;">m</div>
<div class="t tr" style="right:539.5px;top:283.65px;font-size:4.2px;color:#e6e6e6;">90.0</div>
<div class="t" style="left:98.8px;top:283.65px;font-size:4.2px;color:#e6e6e6;">&deg;</div>
<div class="abs" style="left:104.3px;top:292px;width:2.5px;height:117.8px;background:#474747;"></div>
<div class="t" style="left:1.9px;top:412.30px;font-size:4.2px;color:#e8e8e8;"><span style="font-weight:normal">DIALux</span> evo</div>
<div class="t" style="left:541px;top:411.67px;font-size:4.3px;color:#f0f0f0;">Verwalteter Speicher 106MB</div>
<div class="t" style="left:591.6px;top:411.67px;font-size:4.3px;color:#f0f0f0;">1 new message</div>
<div class="abs" style="left:617px;top:411.7px;width:15.6px;height:3.2px;background:#f8f8f8;"></div>
<!--/UI-->
</body></html>
